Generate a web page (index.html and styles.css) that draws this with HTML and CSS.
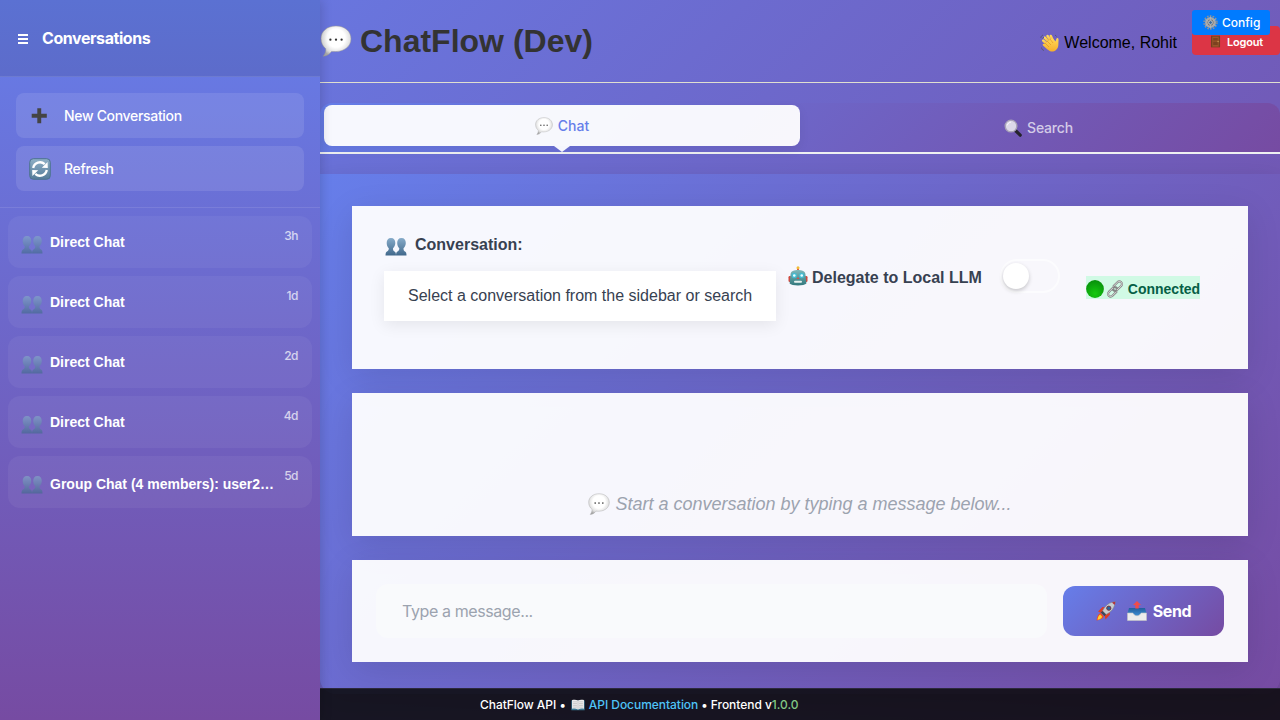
FILE: index.html
```html
<!DOCTYPE html>
<html lang="en">
<head>
<meta charset="utf-8">
<title>ChatFlow (Dev)</title>
<link rel="stylesheet" href="styles.css">
</head>
<body>
<svg class="defs" width="0" height="0" aria-hidden="true">
  <defs>
    <radialGradient id="pearl" cx=".5" cy=".4" r=".6"><stop offset=".5" stop-color="#fff"/><stop offset=".82" stop-color="#dedede"/><stop offset="1" stop-color="#aaa"/></radialGradient>
    <linearGradient id="steel" x2="0" y2="1"><stop stop-color="#86abc9"/><stop offset="1" stop-color="#41698c"/></linearGradient>
    <linearGradient id="tile" x2="0" y2="1"><stop stop-color="#8fb0c6"/><stop offset="1" stop-color="#557b99"/></linearGradient>
    <linearGradient id="skin" x2="0" y2="1"><stop stop-color="#ffd85a"/><stop offset="1" stop-color="#f5ae2c"/></linearGradient>
    <linearGradient id="teal" x2="0" y2="1"><stop stop-color="#7fb9bb"/><stop offset="1" stop-color="#33797e"/></linearGradient>
    <radialGradient id="green" cx=".5" cy=".75" r=".7"><stop stop-color="#15c90f"/><stop offset="1" stop-color="#08930b"/></radialGradient>
    <linearGradient id="tray" x2="0" y2="1"><stop stop-color="#225f9d"/><stop offset="1" stop-color="#4398df"/></linearGradient>
  </defs>
  <symbol id="bubble" viewBox="0 0 32 32"><path d="M16 1C7 1 1 6.500 1 13.500c0 4.500 2 8 4.800 10.200.2 2.800-.8 5-2.600 7.600 4-.4 6.800-2.600 8.300-4.900C23 27.800 31 22 31 13.900 31 6.500 25 1 16 1z" fill="url(#pearl)" stroke="#999" stroke-width=".5"/><circle cx="10.400" cy="14.700" r="1.150" fill="#333"/><circle cx="16" cy="14.700" r="1.150" fill="#333"/><circle cx="21.600" cy="14.700" r="1.150" fill="#333"/></symbol>
  <symbol id="wave" viewBox="0 0 20 20"><g fill="none" stroke="url(#skin)" stroke-linecap="round" stroke-width="2.500"><path d="M9.500 10 4.700 4.600"/><path d="M8 12 3.200 7.600"/><path d="m11.500 9-4-6"/><path d="m13.500 9-2.700-6"/></g><path d="m6 10 6.500-5 3 3.500c.6-1 .5-3.200 1.800-3.500 1.200-.2 1.400 1.500 1.200 3-.3 4 .5 6-2.500 9-3 2.600-6 1.700-8.500-.5L3 12.500c-1-1.500.6-2.300 1.700-1.600z" fill="url(#skin)"/><path d="m5 10 4 4m-2-6 4 4m-1-6 3 4" stroke="#dc8d20" stroke-width=".6" fill="none"/><path d="M.8 5c.2-1.500 1-2.500 2.200-3M2.500 5.500 4 4M1.500 14.500c.2 1.500 1 2.500 2.500 3M15 2l1.700 1.500" stroke="#555675" stroke-width=".9" fill="none"/></symbol>
  <symbol id="gear" viewBox="0 0 20 20"><circle cx="10" cy="10" r="8.600" fill="none" stroke="#929292" stroke-width="2" stroke-dasharray="2.200 1.650"/><circle cx="10" cy="10" r="5.700" fill="#747474" stroke="#a9a9a9" stroke-width="3.200"/><circle cx="10" cy="10" r="2.500" fill="#38699a" stroke="#ddd" stroke-width="1"/><path d="M10 2v5M10 13v5M3 6l4 2.500M13 12l4 2.300M3 14l4-2.500M13 8l4-2.400" stroke="#b5b5b5"/></symbol>
  <symbol id="door" viewBox="0 0 20 20"><path d="M3 1h14v18H3z" fill="#74401f"/><path d="M5 2.500h10V18H5z" fill="#9b5529"/><path d="M6.500 4.500h7v4h-7zm0 6h7v5h-7z" fill="#7c411f"/><circle cx="14" cy="10" r="1" fill="#d2a85c"/></symbol>
  <symbol id="glass" viewBox="0 0 20 20"><path d="m12 12 6 6" stroke="#25232d" stroke-width="3.600" stroke-linecap="round"/><circle cx="7.800" cy="7.800" r="6.500" fill="#dcd8e9" stroke="#a9a3b8" stroke-width="1.500"/><path d="M3.700 7c.4-2 1.800-3.200 4-3.500" stroke="#fff" fill="none"/></symbol>
  <symbol id="plus" viewBox="0 0 20 20"><path d="M8.300 2.300h3.900v5.500h5.600v3.900h-5.600v5.600H8.300v-5.600H2.700V7.800h5.600z" fill="#444"/></symbol>
  <symbol id="refresh" viewBox="0 0 22 22"><rect x=".7" y=".7" width="20.600" height="20.600" rx="3.600" fill="url(#tile)" stroke="#4d7390"/><path d="M4.200 10a6.900 6.900 0 0 1 11.500-3.800M17.800 12A6.900 6.900 0 0 1 6.300 15.800" fill="none" stroke="#fff" stroke-width="2.300"/><path d="m12.800 9.800 6 .2-.2-6zM9.200 12.200l-6-.2.200 6z" fill="#fff"/></symbol>
  <symbol id="people" viewBox="0 0 22 20"><path id="person" d="M6 1C3 1 1.700 3 1.700 6c0 2.200.8 4.200 2.100 5.200 0 1.700-.6 2.600-1.800 3.300C1 15 .5 16 .5 18.500H11c0-2.500-.5-3.500-1.500-4-1.200-.7-1.500-1.600-1.500-3.300 1.300-1 2.300-3 2.300-5.200C10.300 3 9 1 6 1z" fill="url(#steel)"/><use href="#person" x="10.500"/></symbol>
  <symbol id="robot" viewBox="0 0 20 20"><path d="M10 2v4" stroke="#df5147" stroke-width="2"/><circle cx="10" cy="1.800" r="1.500" fill="#f2bd38"/><rect x=".5" y="10" width="3" height="6" rx="1.200" fill="#cf493f"/><rect x="16.500" y="10" width="3" height="6" rx="1.200" fill="#cf493f"/><path d="M2.600 8c0-5.500 14.800-5.500 14.800 0l1 9.500c-2 2.500-14.800 2.500-16.800 0z" fill="url(#teal)"/><circle cx="6.300" cy="9.500" r="2" fill="#eaffff" stroke="#45bad0" stroke-width="1.300"/><circle cx="13.700" cy="9.500" r="2" fill="#eaffff" stroke="#45bad0" stroke-width="1.300"/><path d="m10 11 1.300 2H8.700z" fill="#e14b46"/><rect x="6" y="14.800" width="8" height="2" rx="1" fill="#e7f2ef"/></symbol>
  <symbol id="link" viewBox="0 0 20 20"><g fill="none" stroke-linecap="round"><path id="chain" d="m8.500 6.700 4-4c3-3 7.200 1 4.300 4l-4.300 4.200c-1.500 1.400-3.300 1.200-4.500.1M11.500 13.200l-4 4c-3 3-7.200-1-4.300-4L7.500 9C9 7.600 10.800 7.800 12 9" stroke="#858585" stroke-width="2.400"/><path d="m8.500 6.700 4-4c3-3 7.200 1 4.300 4l-4.300 4.200M11.500 13.200l-4 4c-3 3-7.200-1-4.300-4L7.500 9" stroke="#dadada" stroke-width="1.100"/></g></symbol>
  <symbol id="rocket" viewBox="0 0 20 20"><path d="M2 10.500 6.500 6l5 .5-5 6zM13 8.500l1 5L9.500 18.500l-1-5z" fill="#df3b27"/><path d="M6.500 10C9 4.500 13.500 1 19.300.7 18.800 6.500 15.500 11 10 13.500z" fill="#c5cbd1" stroke="#777e87" stroke-width=".6"/><path d="m6.500 10 3.500 3.500-1.500 1.700-3.700-3.700z" fill="#3f4955"/><circle cx="12.800" cy="7.200" r="2.100" fill="#25669a" stroke="#7b3340"/><path d="M16 1.500c1-.5 2-.7 3.300-.8-.1 1.200-.3 2.300-.8 3.300z" fill="#b0343d"/><path d="M4.800 12C2 12.700 1 16 .5 19.500c3.500-.7 6.500-1.500 7.300-4.200z" fill="#f14a23"/><path d="M4.300 13.500c-1.700.7-2.500 3-2.800 5.200 2.200-.4 4-1 4.600-3z" fill="#ffd12f"/></symbol>
  <symbol id="outbox" viewBox="0 0 20 20"><path d="M2 7h16l1.500 5.500-3 4H3.500l-3-4z" fill="url(#tray)"/><path d="m10 0 4 4h-2.300v3.500H8.300V4H6z" fill="#f04c4a"/><path d="M.5 12h5c1 0 1.500 2.800 4.500 2.800S13.500 12 14.500 12h5v7.500H.5z" fill="#ececec" stroke="#c4c4c4" stroke-width=".6"/></symbol>
  <symbol id="book" viewBox="0 0 20 20"><path d="M.5 3.500h19v14H.5z" fill="#397590"/><path d="M1.500 3c3-1 6-.8 8.500.5C12.500 2.200 15.500 2 18.500 3v12.500c-3-.7-6-.6-8.500 1-2.500-1.600-5.500-1.700-8.500-1z" fill="#eee"/><path d="M10 3.500v13M3 5.500h5.500M3 8h5.500M3 10.500h5.500M3 13h5.500m3-7.500H17M11.500 8H17m-5.500 2.500H17M11.500 13H17" stroke="#aaa" stroke-width=".8"/></symbol>
</svg>
<div class="app">
  <aside class="sidebar">
    <div class="sidebar-header">
      <svg class="menu" viewBox="0 0 10 10"><path d="M0 1h10M0 5h10M0 9h10"/></svg>
      <span class="sidebar-title">Conversations</span>
    </div>
    <div class="actions">
      <button class="action"><svg class="i20"><use href="#plus"/></svg><span>New Conversation</span></button>
      <button class="action"><svg class="i22"><use href="#refresh"/></svg><span>Refresh</span></button>
    </div>
    <div class="chats">
      <div class="chat"><svg class="people"><use href="#people"/></svg><span class="name">Direct Chat</span><span class="time">3h</span></div>
      <div class="chat"><svg class="people"><use href="#people"/></svg><span class="name">Direct Chat</span><span class="time">1d</span></div>
      <div class="chat"><svg class="people"><use href="#people"/></svg><span class="name">Direct Chat</span><span class="time">2d</span></div>
      <div class="chat"><svg class="people"><use href="#people"/></svg><span class="name">Direct Chat</span><span class="time">4d</span></div>
      <div class="chat"><svg class="people"><use href="#people"/></svg><span class="name group">Group Chat (4 members): user2…</span><span class="time">5d</span></div>
    </div>
  </aside>
  <main class="main">
    <header class="header">
      <h1><svg class="logo"><use href="#bubble"/></svg><span>ChatFlow (Dev)</span></h1>
      <div class="user">
        <span class="welcome"><svg class="i20"><use href="#wave"/></svg><span>Welcome, Rohit</span></span>
        <button class="logout"><svg class="i13"><use href="#door"/></svg><span>Logout</span></button>
      </div>
      <button class="config"><svg class="i15"><use href="#gear"/></svg><span>Config</span></button>
    </header>
    <nav class="tabs">
      <div class="tab active"><svg class="i18"><use href="#bubble"/></svg><span>Chat</span></div>
      <div class="tab inactive"><svg class="i18"><use href="#glass"/></svg><span>Search</span></div>
    </nav>
    <section class="content">
      <div class="card top">
        <div class="picker">
          <div class="label"><svg class="people"><use href="#people"/></svg><span>Conversation:</span></div>
          <div class="selected">Select a conversation from the sidebar or search</div>
        </div>
        <div class="delegate"><svg class="i20"><use href="#robot"/></svg><span>Delegate to Local LLM</span></div>
        <div class="toggle"><div class="knob"></div></div>
        <div class="status"><svg class="i18" viewBox="0 0 18 18"><circle cx="9" cy="9" r="8.900" fill="url(#green)"/></svg><svg class="i18 chain"><use href="#link"/></svg><span>Connected</span></div>
      </div>
      <div class="card empty"><svg class="i22"><use href="#bubble"/></svg><span>Start a conversation by typing a message below...</span></div>
      <div class="card composer">
        <div class="input"><span>Type a message...</span></div>
        <button class="send"><svg class="i20"><use href="#rocket"/></svg><svg class="i20 out"><use href="#outbox"/></svg><span>Send</span></button>
      </div>
    </section>
    <footer class="footer"><span class="f1">ChatFlow API •</span><svg class="i14"><use href="#book"/></svg><span class="f2">API Documentation</span><span class="f3">• Frontend v<b>1.0.0</b></span></footer>
  </main>
</div>
</body>
</html>
```
FILE: styles.css
```css
* { box-sizing: border-box; }
body { margin: 0; font-family: "Liberation Sans", Arial, sans-serif; font-size: 16px; overflow: hidden; background: linear-gradient(135deg, #667eea, #764ba2); }
button { border: 0; padding: 0; margin: 0; font-family: Inter, sans-serif; color: #fff; display: flex; align-items: center; }
svg { display: block; flex: none; }
span { white-space: nowrap; }
.defs { position: absolute; }
.i13 { width: 13px; height: 13px; }
.i14 { width: 14px; height: 14px; }
.i15 { width: 15px; height: 15px; }
.i18 { width: 18px; height: 18px; }
.i20 { width: 20px; height: 20px; }
.i22 { width: 22px; height: 22px; }
.people { width: 22px; height: 20px; }

.app { display: flex; height: 720px; background: linear-gradient(135deg, #667eea, #764ba2); }
.sidebar { width: 320px; flex: none; background: linear-gradient(180deg, #667eea, #764ba2); box-shadow: 2px 0 10px rgba(0,0,0,.15); position: relative; z-index: 2; color: #fff; }
.sidebar-header { height: 77px; padding: 0 18px; display: flex; align-items: center; gap: 14px; background: rgba(0,0,0,.1); border-bottom: 1px solid rgba(255,255,255,.1); }
.menu { width: 10px; height: 10px; stroke: #fff; stroke-width: 2; margin-top: 1px; }
.sidebar-title { font: 700 16px Inter, sans-serif; letter-spacing: -.43px; }
.actions { padding: 16px; display: flex; flex-direction: column; gap: 8px; border-bottom: 1px solid rgba(255,255,255,.1); }
.action { height: 45px; border-radius: 8px; background: rgba(255,255,255,.1); padding-left: 13px; font-size: 14px; font-weight: 500; letter-spacing: -.32px; }
.action svg { margin-right: 13px; }
.action .i20 { margin: 0 15px 0 0; }
.chats { padding: 8px; display: flex; flex-direction: column; gap: 8px; }
.chat { height: 52px; border-radius: 12px; background: rgba(255,255,255,.05); display: flex; align-items: center; padding: 0 14px 0 13px; }
.chat .people { opacity: .65; margin: 5px 7px 0 0; }
.name { font-size: 14px; font-weight: 700; flex: 1; }
.name.group { padding-top: 4px; }
.time { font: 500 12px Inter, sans-serif; letter-spacing: -.5px; opacity: .7; margin-top: -13px; }

.main { flex: 1; display: flex; flex-direction: column; min-width: 0; }
.header { height: 83px; border-bottom: 1px solid #e0dfd0; display: flex; justify-content: space-between; align-items: center; position: relative; flex: none; }
h1 { margin: 0; font-size: 32px; color: #333; display: flex; align-items: center; }
.logo { width: 32px; height: 32px; margin: -1px 8px 0 0; }
.user { display: flex; align-items: center; gap: 15px; }
.welcome { display: flex; align-items: center; gap: 4px; padding-top: 3px; }
.logout { width: 88px; height: 29px; margin-top: -1px; border-radius: 4px; background: #dc3545; padding: 2px 0 0 17px; gap: 5px; font-size: 11px; font-weight: 600; letter-spacing: -.2px; }
.config { position: absolute; right: 10px; top: 10px; width: 78px; height: 25px; border-radius: 3px; background: #007bff; padding-left: 11px; gap: 4px; font-size: 12px; font-weight: 500; }
.tabs { margin: 20px 0; height: 51px; flex: none; display: grid; grid-template-columns: 1fr 1fr; border-bottom: 2px solid #eef0f2; border-radius: 12px 12px 0 0; background: linear-gradient(135deg, #667eea, #764ba2); padding-left: 4px; }
.tab { display: flex; align-items: center; justify-content: center; gap: 5px; font: 500 14px Inter, sans-serif; color: #667eea; }
.active { position: relative; height: 41px; margin-top: 2px; margin-right: 2px; border-radius: 8px; background: rgba(255,255,255,.95); box-shadow: 0 4px 12px rgba(0,0,0,.06); }
.active::after { content: ""; position: absolute; top: 100%; left: 50%; margin-left: -8px; border: 8px solid transparent; border-top: 6px solid #f5f6fd; border-bottom: 0; }
.inactive { color: rgba(255,255,255,.7); padding-right: 5px; letter-spacing: -.2px; }
.content { height: 520px; margin-bottom: -6px; flex: none; border-radius: 0 0 16px 16px; background: linear-gradient(135deg, #667eea, #764ba2); box-shadow: 0 10px 30px rgba(0,0,0,.15); padding: 32px; display: flex; flex-direction: column; gap: 24px; }
.card { background: rgba(255,255,255,.95); box-shadow: 0 8px 32px rgba(0,0,0,.1); flex: none; }
.top { height: 163px; padding: 28px 32px; display: flex; align-items: flex-start; }
.picker { width: 392px; flex: none; }
.label { height: 22px; display: flex; align-items: center; gap: 9px; font-weight: 700; color: #374151; }
.label .people { margin: 3px -1px 0 1px; }
.selected { margin-top: 15px; height: 50px; padding: 0 24px; line-height: 49px; white-space: nowrap; background: #fff; color: #374151; box-shadow: 0 4px 15px rgba(0,0,0,.08); }
.delegate { margin: 31px 0 0 12px; display: flex; align-items: center; gap: 4px; font-weight: 700; color: #374151; }
.delegate span { padding-top: 4px; }
.toggle { margin: 25px 0 0 18px; width: 60px; height: 34px; border-radius: 17px; border: 2px solid rgba(255,255,255,.6); padding: 2px 1px; }
.knob { width: 26px; height: 26px; border-radius: 50%; background: #fff; box-shadow: 0 2px 4px rgba(0,0,0,.2); }
.status { margin: 42px 0 0 26px; height: 23px; display: flex; align-items: center; background: #d1fae5; color: #065f46; font-size: 14px; font-weight: 700; padding-top: 3px; }
.status .chain { margin: 0 4px 0 2px; }
.empty { height: 143px; display: flex; align-items: flex-end; justify-content: center; gap: 5px; padding-bottom: 21px; color: #9ca3af; font-size: 18px; font-style: italic; }
.composer { height: 102px; padding: 24px; display: flex; align-items: center; justify-content: space-between; }
.input { width: 671px; height: 54px; border-radius: 12px; background: #f9fafc; padding-left: 26px; display: flex; align-items: center; color: #9ca3af; font-family: Inter, sans-serif; letter-spacing: -.4px; }
.send { width: 161px; height: 50px; border-radius: 12px; background: linear-gradient(135deg, #667eea, #764ba2); justify-content: center; font-size: 16px; font-weight: 700; letter-spacing: -.4px; }
.send .out { margin: 0 6px 0 11px; }
.footer { position: relative; height: 32px; flex: none; background: rgba(10,10,12,.87); border-top: 1px solid #2c293c; display: flex; align-items: center; padding-left: 160px; font: 500 12px Inter, sans-serif; letter-spacing: -.04px; color: #fff; }
.footer svg { margin: 0 4px 0 5px; }
.f2 { color: #4fc3f7; }
.f3 { margin-left: 3px; }
.f3 b { color: #81c784; font-weight: 500; }
```
